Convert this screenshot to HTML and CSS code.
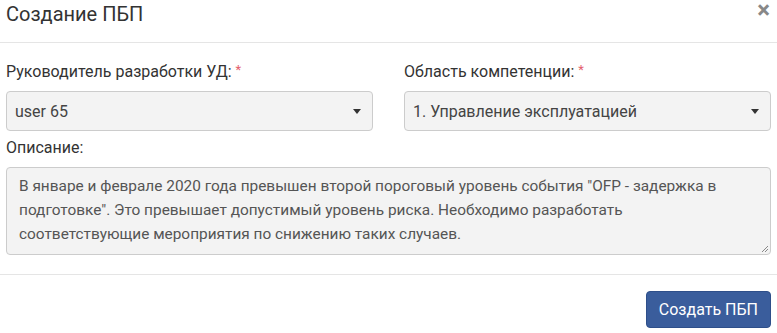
FILE: index.html
```html
<!DOCTYPE html>
<html lang="ru">
<head>
<meta charset="utf-8">
<link rel="stylesheet" href="styles.css">
</head>
<body>
<div class="modal">
  <div class="modal-header">
    <h4 class="modal-title">Создание ПБП</h4>
    <span class="close">×</span>
  </div>
  <div class="modal-body">
    <div class="row">
      <div class="field">
        <label class="label">Руководитель разработки УД: <span class="req">*</span></label>
        <div class="select"><span>user 65</span><span class="caret"></span></div>
      </div>
      <div class="field">
        <label class="label">Область компетенции: <span class="req">*</span></label>
        <div class="select"><span>1. Управление эксплуатацией</span><span class="caret"></span></div>
      </div>
    </div>
    <label class="label">Описание:</label>
    <div class="textarea">В январе и феврале 2020 года превышен второй пороговый уровень события "OFP - задержка в подготовке". Это превышает допустимый уровень риска. Необходимо разработать соответствующие мероприятия по снижению таких случаев.<svg class="grip" width="8" height="8" viewBox="0 0 8 8"><path d="M7 1 L1 7 M7 4 L4 7" stroke="#888" stroke-width="1"/></svg></div>
  </div>
  <div class="modal-footer">
    <button class="btn">Создать ПБП</button>
  </div>
</div>
</body>
</html>
```
FILE: styles.css
```css
* { box-sizing: border-box; }
html, body { margin: 0; padding: 0; background: #fff; }
body {
  font-family: Roboto, "Liberation Sans", Arial, sans-serif;
  font-size: 16px;
  color: #333;
}
.modal { width: 777px; }
.modal-header {
  height: 43px;
  border-bottom: 1px solid #e5e5e5;
  display: flex;
  justify-content: space-between;
  align-items: flex-start;
  padding: 0 7px 0 6px;
}
.modal-title {
  margin: 0;
  font-size: 20px;
  font-weight: 400;
  line-height: 29px;
  color: #333;
}
.close {
  font-size: 24px;
  font-weight: 700;
  color: #888;
  line-height: 20px;
}
.modal-body { padding: 15px 6px 19px 6px; }
.row {
  display: grid;
  grid-template-columns: 1fr 1fr;
  column-gap: 31px;
  margin-bottom: 5px;
}
.label {
  display: block;
  line-height: 24px;
  margin-bottom: 7px;
  color: #333;
}
.req { color: #e4606d; font-size: 13px; vertical-align: 3px; }
.select {
  height: 40px;
  border: 1px solid #ccc;
  border-radius: 4px;
  background: #f3f3f3;
  display: flex;
  align-items: center;
  justify-content: space-between;
  padding: 0 11px 0 8px;
  color: #444;
}
.caret {
  width: 0; height: 0;
  border-left: 4px solid transparent;
  border-right: 4px solid transparent;
  border-top: 5px solid #333;
}
.textarea {
  position: relative;
  height: 88px;
  border: 1px solid #ccc;
  border-radius: 4px;
  background: #f3f3f3;
  padding: 6px 24px 6px 12px;
  font-size: 15.4px;
  line-height: 24px;
  color: #555;
}
.grip { position: absolute; right: 1px; bottom: 1px; }
.modal-footer {
  border-top: 1px solid #e5e5e5;
  padding: 16px 6px 0 6px;
  display: flex;
  justify-content: flex-end;
}
.btn {
  font-family: inherit;
  font-size: 16px;
  color: #fff;
  background: #3a5d9c;
  border: 1px solid #2e4f8a;
  border-radius: 4px;
  height: 37px;
  padding: 0 12px;
}
```
